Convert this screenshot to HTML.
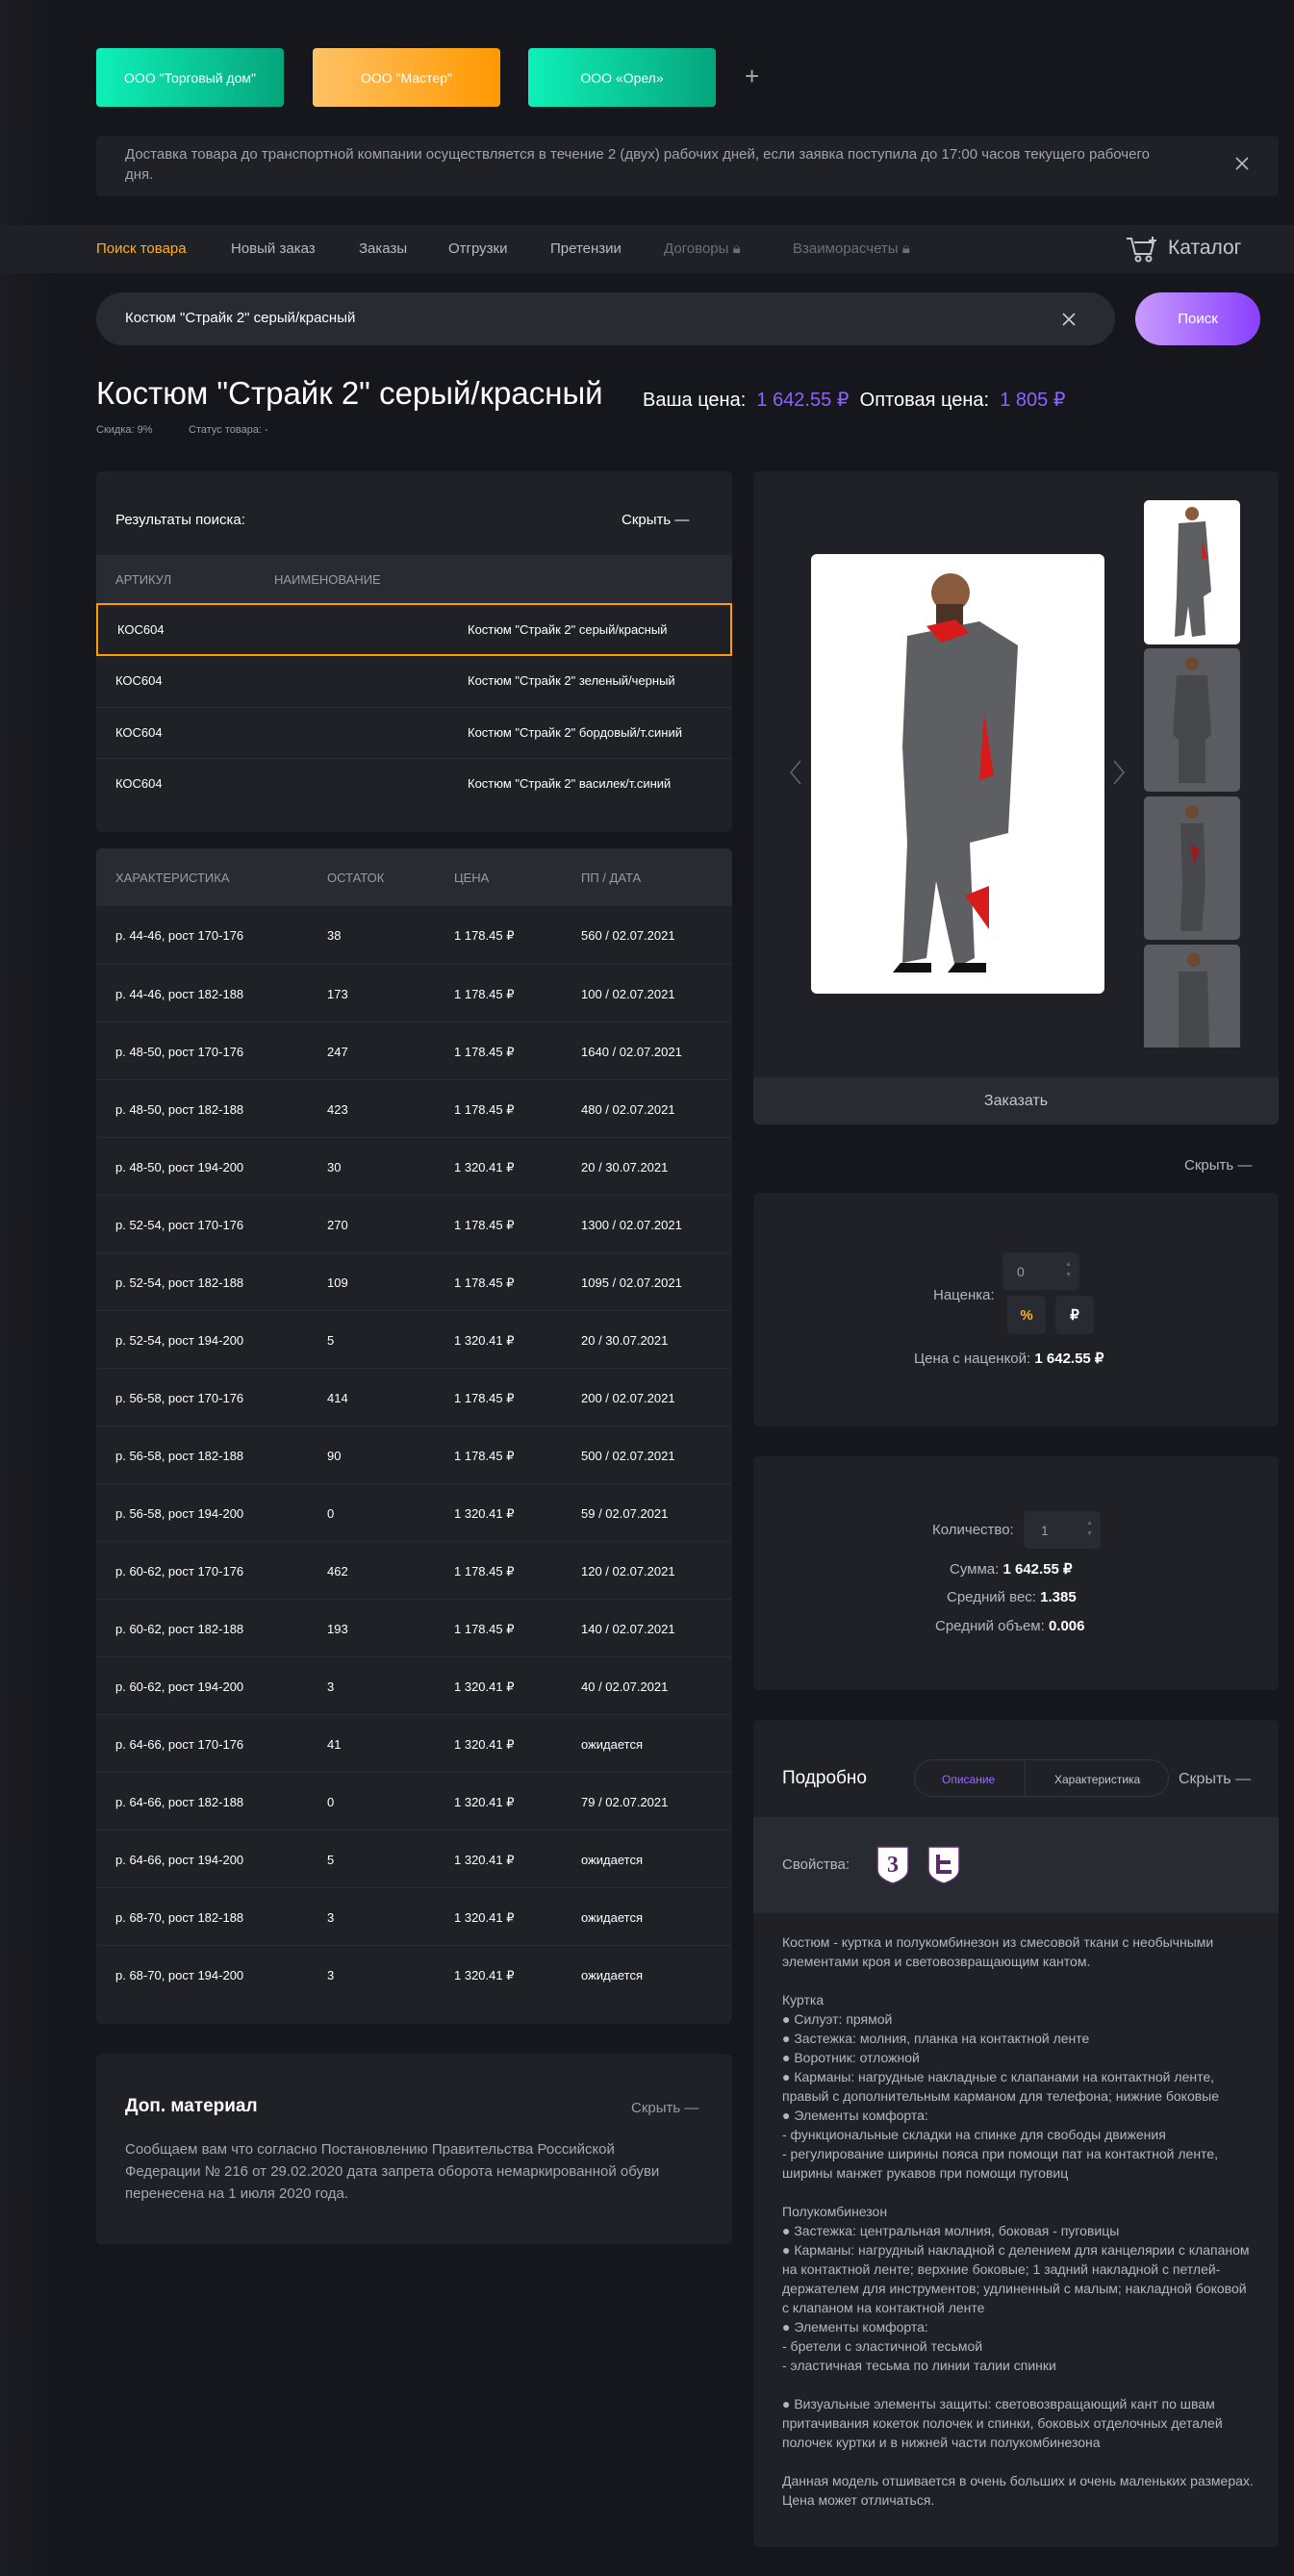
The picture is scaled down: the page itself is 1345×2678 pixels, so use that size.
<!DOCTYPE html>
<html><head><meta charset="utf-8">
<style>
*{box-sizing:border-box;margin:0;padding:0}
body{width:1345px;height:2678px;background:#16171c;font-family:"Liberation Sans",Arial,sans-serif;color:#fff;position:relative;overflow:hidden}
.a{position:absolute}
.tab{position:absolute;top:50px;height:61px;width:195px;border-radius:4px;display:flex;align-items:center;justify-content:center;font-size:14px;color:#fff}
.g{background:linear-gradient(90deg,#0ef0b8,#06a57c)}
.o{background:linear-gradient(90deg,#ffc265,#ff9900)}
.card{position:absolute;background:#1f2127;border-radius:6px;overflow:hidden}
.nav span{position:absolute;top:250px;font-size:15px;color:#b8bac0}
.row{position:absolute;left:0;width:661px;border-top:1px solid #2a2c33;font-size:13px;color:#fff}
.row span{position:absolute}
.hd{position:absolute;left:0;width:661px;background:#292b33;font-size:13px;color:#9a9ca3}
.hd span{position:absolute}
.desc{font-size:14px;line-height:20px;color:#b5b7bd;white-space:nowrap}
.btn{position:absolute;background:#292b33;border-radius:5px;display:flex;align-items:center;justify-content:center;font-size:15px;font-weight:bold}
.inp{position:absolute;background:#292b33;border-radius:5px;font-size:14px;color:#9a9ca3}
.lbl{position:absolute;font-size:15px;color:#b5b7bd;white-space:nowrap}
.lbl b{color:#fff;font-weight:bold}
</style></head><body>
<div class="a" style="left:0;top:0;width:60px;height:2678px;background:linear-gradient(90deg,#1b1c21,#16171c)"></div>

<div class="tab g" style="left:100px">ООО "Торговый дом"</div>
<div class="tab o" style="left:325px">ООО "Мастер"</div>
<div class="tab g" style="left:549px">ООО «Орел»</div>
<div class="a" style="left:774px;top:64px;font-size:26px;color:#aaa;font-weight:300">+</div>

<div class="a" style="left:100px;top:141px;width:1229px;height:63px;background:#1f2127;border-radius:5px"></div>
<div class="a" style="left:130px;top:150px;width:1080px;font-size:15px;line-height:21px;color:#a0a3ab">Доставка товара до транспортной компании осуществляется в течение 2 (двух) рабочих дней, если заявка поступила до 17:00 часов текущего рабочего дня.</div>
<svg class="a" style="left:1283px;top:162px" width="16" height="16"><path d="M2 2L14 14M14 2L2 14" stroke="#bbb" stroke-width="1.6"/></svg>

<div class="a" style="left:0;top:234px;width:1345px;height:50px;background:#1f2127"></div>
<div class="nav">
<span style="left:100px;color:#ffb020">Поиск товара</span>
<span style="left:240px">Новый заказ</span>
<span style="left:373px">Заказы</span>
<span style="left:466px">Отгрузки</span>
<span style="left:572px">Претензии</span>
<span style="left:690px;color:#6d6f76">Договоры 🔒︎</span>
<span style="left:824px;color:#6d6f76">Взаиморасчеты 🔒︎</span>
</div>
<svg class="a" style="left:1170px;top:244px" width="36" height="30" fill="none" stroke="#c5c7cc" stroke-width="2"><path d="M1 4h5l4 16h16l3-12H9M28 2v8M24 6h8"/><circle cx="13" cy="25" r="2.5"/><circle cx="24" cy="25" r="2.5"/></svg>
<div class="a" style="left:1214px;top:246px;font-size:21px;color:#c5c7cc">Каталог</div>

<div class="a" style="left:100px;top:304px;width:1059px;height:55px;background:#292b33;border-radius:28px"></div>
<div class="a" style="left:130px;top:322px;font-size:15px;color:#fff">Костюм "Страйк 2" серый/красный</div>
<svg class="a" style="left:1103px;top:324px" width="16" height="16"><path d="M2 2L14 14M14 2L2 14" stroke="#ccc" stroke-width="1.6"/></svg>
<div class="a" style="left:1180px;top:304px;width:130px;height:55px;border-radius:28px;background:linear-gradient(90deg,#c79bff,#8a3fff);display:flex;align-items:center;justify-content:center;font-size:15px">Поиск</div>

<div class="a" style="left:100px;top:390px;font-size:33px;white-space:nowrap">Костюм "Страйк 2" серый/красный</div>
<div class="a" style="left:668px;top:403px;font-size:20px;white-space:nowrap">Ваша цена: <span style="color:#8e63ff">&nbsp;1 642.55 ₽</span>&nbsp; Оптовая цена: <span style="color:#8e63ff">&nbsp;1 805 ₽</span></div>
<div class="a" style="left:100px;top:441px;font-size:11px;color:#9a9ca3">Скидка: 9%</div>
<div class="a" style="left:196px;top:441px;font-size:11px;color:#9a9ca3">Статус товара: -</div>

<div class="card" style="left:100px;top:490px;width:661px;height:375px">
<div class="a" style="left:20px;top:42px;font-size:15px">Результаты поиска:</div>
<div class="a" style="left:546px;top:42px;font-size:15px">Скрыть —</div>
<div class="hd" style="top:87px;height:50px"><span style="left:20px;top:18px">АРТИКУЛ</span><span style="left:185px;top:18px">НАИМЕНОВАНИЕ</span></div>
<div class="row" style="top:137px;height:55px;border:2px solid #ff9a00"><span style="left:20px;top:18px">КОС604</span><span style="left:384px;top:18px">Костюм "Страйк 2" серый/красный</span></div>
<div class="row" style="top:192px;height:53px;border-top:none"><span style="left:20px;top:18px">КОС604</span><span style="left:386px;top:18px">Костюм "Страйк 2" зеленый/черный</span></div>
<div class="row" style="top:245px;height:53px"><span style="left:20px;top:18px">КОС604</span><span style="left:386px;top:18px">Костюм "Страйк 2" бордовый/т.синий</span></div>
<div class="row" style="top:298px;height:53px"><span style="left:20px;top:18px">КОС604</span><span style="left:386px;top:18px">Костюм "Страйк 2" василек/т.синий</span></div>
</div>

<div class="card" style="left:100px;top:882px;width:661px;height:1222px">
<div class="hd" style="top:0;height:60px"><span style="left:20px;top:23px">ХАРАКТЕРИСТИКА</span><span style="left:240px;top:23px">ОСТАТОК</span><span style="left:372px;top:23px">ЦЕНА</span><span style="left:504px;top:23px">ПП / ДАТА</span></div>
<div id="rows"></div>
</div>

<div class="card" style="left:100px;top:2135px;width:661px;height:198px">
<div class="a" style="left:30px;top:44px;font-size:19px;font-weight:bold">Доп. материал</div>
<div class="a" style="left:556px;top:48px;font-size:15px;color:#9a9ca3">Скрыть —</div>
<div class="a" style="left:30px;top:88px;font-size:15px;line-height:23px;color:#a6a8ae;white-space:nowrap">Сообщаем вам что согласно Постановлению Правительства Российской<br>Федерации № 216 от 29.02.2020 дата запрета оборота немаркированной обуви<br>перенесена на 1 июля 2020 года.</div>
</div>

<div class="card" style="left:783px;top:490px;width:546px;height:679px">
<svg class="a" style="left:37px;top:300px" width="14" height="26"><path d="M12 1L2 13L12 25" stroke="#666" fill="none" stroke-width="1.5"/></svg>
<svg class="a" style="left:373px;top:300px" width="14" height="26"><path d="M2 1L12 13L2 25" stroke="#666" fill="none" stroke-width="1.5"/></svg>
<div class="a" style="left:60px;top:86px;width:305px;height:457px;background:#fff;border-radius:6px">
<svg width="305" height="457" viewBox="0 0 305 457">
<circle cx="145" cy="40" r="20" fill="#8a5a3c"/><rect x="130" y="52" width="28" height="22" fill="#4a3325"/>
<path d="M100 85L175 70L215 95L205 290L165 300L170 420L150 430L130 340L120 420L95 425L100 300L95 200Z" fill="#5d5f62"/>
<path d="M120 75L150 68L165 82L135 92Z" fill="#d91a1a"/><path d="M180 165L190 230L175 235Z" fill="#d91a1a"/><path d="M160 355L185 345L185 390Z" fill="#d91a1a"/>
<path d="M93 425h32v10H85ZM150 425h32v10h-40Z" fill="#111"/>
</svg></div>
<div class="a" style="left:406px;top:30px;width:100px;height:150px;background:#fff;border-radius:5px"><svg width="100" height="150"><circle cx="50" cy="14" r="7" fill="#8a5a3c"/><path d="M36 24L64 22L70 95L62 100L64 140L50 142L46 110L42 140L32 142L34 100Z" fill="#5d5f62"/><path d="M60 40L66 60L60 62Z" fill="#d91a1a"/></svg></div>
<div class="a" style="left:406px;top:184px;width:100px;height:149px;background:#5a5c62;border-radius:5px"><svg width="100" height="150"><circle cx="50" cy="16" r="7" fill="#6a4a35"/><path d="M34 28L66 28L70 90L64 95L64 140L36 140L36 95L30 90Z" fill="#46484c"/></svg></div>
<div class="a" style="left:406px;top:338px;width:100px;height:149px;background:#5a5c62;border-radius:5px"><svg width="100" height="150"><circle cx="50" cy="16" r="7" fill="#6a4a35"/><path d="M38 28L62 28L64 90L60 140L38 140L40 90Z" fill="#46484c"/><path d="M48 50L58 55L52 70Z" fill="#a01818"/></svg></div>
<div class="a" style="left:406px;top:492px;width:100px;height:107px;background:#5a5c62;border-radius:5px 5px 0 0"><svg width="100" height="107"><circle cx="52" cy="16" r="7" fill="#6a4a35"/><path d="M36 28L66 28L68 107L36 107Z" fill="#46484c"/></svg></div>
<div class="a" style="left:0;top:630px;width:546px;height:49px;background:#292b33;display:flex;align-items:center;justify-content:center;font-size:16px;color:#c5c7cc">Заказать</div>
</div>

<div class="a" style="left:1231px;top:1203px;font-size:15px;color:#b5b7bd">Скрыть —</div>

<div class="card" style="left:783px;top:1240px;width:546px;height:243px"></div>
<div class="lbl" style="left:970px;top:1338px">Наценка:</div>
<div class="inp" style="left:1042px;top:1302px;width:80px;height:39px;padding:12px 0 0 15px">0<span style="position:absolute;right:8px;top:7px;font-size:7px;line-height:11px;color:#666">▲<br>▼</span></div>
<div class="btn" style="left:1047px;top:1347px;width:40px;height:40px;color:#ffb020">%</div>
<div class="btn" style="left:1097px;top:1347px;width:40px;height:40px;color:#fff">₽</div>
<div class="lbl" style="left:950px;top:1403px">Цена с наценкой: <b>1 642.55 ₽</b></div>

<div class="card" style="left:783px;top:1514px;width:546px;height:243px"></div>
<div class="lbl" style="left:969px;top:1582px">Количество:</div>
<div class="inp" style="left:1064px;top:1571px;width:80px;height:39px;padding:12px 0 0 18px">1<span style="position:absolute;right:8px;top:7px;font-size:7px;line-height:11px;color:#666">▲<br>▼</span></div>
<div class="lbl" style="left:987px;top:1622px">Сумма: <b>1 642.55 ₽</b></div>
<div class="lbl" style="left:984px;top:1652px">Средний вес: <b>1.385</b></div>
<div class="lbl" style="left:972px;top:1682px">Средний объем: <b>0.006</b></div>

<div class="card" style="left:783px;top:1788px;width:546px;height:860px">
<div class="a" style="left:30px;top:50px;font-size:19px">Подробно</div>
<div class="a" style="left:167px;top:41px;width:265px;height:39px;border:1px solid #33353c;border-radius:20px"></div>
<div class="a" style="left:282px;top:41px;width:1px;height:39px;background:#33353c"></div>
<div class="a" style="left:196px;top:55px;font-size:12px;color:#9a6bff">Описание</div>
<div class="a" style="left:313px;top:55px;font-size:12px;color:#c5c7cc">Характеристика</div>
<div class="a" style="left:442px;top:53px;font-size:16px;color:#b5b7bd">Скрыть —</div>
<div class="a" style="left:0;top:101px;width:546px;height:100px;background:#292b33"></div>
<div class="a" style="left:30px;top:142px;font-size:15px;color:#b5b7bd">Свойства:</div>
<svg class="a" style="left:128px;top:131px" width="34" height="40"><path d="M1 1h32v24c0 7-9 12-16 14C10 37 1 32 1 25Z" fill="#fff" stroke="#5a2a6a" stroke-width="1.5"/><text x="17" y="27" font-family="Liberation Serif" font-weight="bold" font-size="24" fill="#5a2a6a" text-anchor="middle">3</text></svg>
<svg class="a" style="left:181px;top:131px" width="34" height="40"><path d="M1 1h32v24c0 7-9 12-16 14C10 37 1 32 1 25Z" fill="#fff" stroke="#5a2a6a" stroke-width="1.5"/><path d="M11 9v16M11 17h13M9 27h16" stroke="#5a2a6a" stroke-width="4"/></svg>
<div class="a desc" style="left:30px;top:221px">Костюм - куртка и полукомбинезон из смесовой ткани с необычными<br>элементами кроя и световозвращающим кантом.<br><br>Куртка<br>● Силуэт: прямой<br>● Застежка: молния, планка на контактной ленте<br>● Воротник: отложной<br>● Карманы: нагрудные накладные с клапанами на контактной ленте,<br>правый с дополнительным карманом для телефона; нижние боковые<br>● Элементы комфорта:<br>- функциональные складки на спинке для свободы движения<br>- регулирование ширины пояса при помощи пат на контактной ленте,<br>ширины манжет рукавов при помощи пуговиц<br><br>Полукомбинезон<br>● Застежка: центральная молния, боковая - пуговицы<br>● Карманы: нагрудный накладной с делением для канцелярии с клапаном<br>на контактной ленте; верхние боковые; 1 задний накладной с петлей-<br>держателем для инструментов; удлиненный с малым; накладной боковой<br>с клапаном на контактной ленте<br>● Элементы комфорта:<br>- бретели с эластичной тесьмой<br>- эластичная тесьма по линии талии спинки<br><br>● Визуальные элементы защиты: световозвращающий кант по швам<br>притачивания кокеток полочек и спинки, боковых отделочных деталей<br>полочек куртки и в нижней части полукомбинезона<br><br>Данная модель отшивается в очень больших и очень маленьких размерах.<br>Цена может отличаться.</div>
</div>

<script>
var d=[["р. 44-46, рост 170-176","38","1 178.45 ₽","560 / 02.07.2021"],["р. 44-46, рост 182-188","173","1 178.45 ₽","100 / 02.07.2021"],["р. 48-50, рост 170-176","247","1 178.45 ₽","1640 / 02.07.2021"],["р. 48-50, рост 182-188","423","1 178.45 ₽","480 / 02.07.2021"],["р. 48-50, рост 194-200","30","1 320.41 ₽","20 / 30.07.2021"],["р. 52-54, рост 170-176","270","1 178.45 ₽","1300 / 02.07.2021"],["р. 52-54, рост 182-188","109","1 178.45 ₽","1095 / 02.07.2021"],["р. 52-54, рост 194-200","5","1 320.41 ₽","20 / 30.07.2021"],["р. 56-58, рост 170-176","414","1 178.45 ₽","200 / 02.07.2021"],["р. 56-58, рост 182-188","90","1 178.45 ₽","500 / 02.07.2021"],["р. 56-58, рост 194-200","0","1 320.41 ₽","59 / 02.07.2021"],["р. 60-62, рост 170-176","462","1 178.45 ₽","120 / 02.07.2021"],["р. 60-62, рост 182-188","193","1 178.45 ₽","140 / 02.07.2021"],["р. 60-62, рост 194-200","3","1 320.41 ₽","40 / 02.07.2021"],["р. 64-66, рост 170-176","41","1 320.41 ₽","ожидается"],["р. 64-66, рост 182-188","0","1 320.41 ₽","79 / 02.07.2021"],["р. 64-66, рост 194-200","5","1 320.41 ₽","ожидается"],["р. 68-70, рост 182-188","3","1 320.41 ₽","ожидается"],["р. 68-70, рост 194-200","3","1 320.41 ₽","ожидается"]];
var h="";d.forEach(function(r,i){h+='<div class="row" style="top:'+(60+i*60)+'px;height:60px;'+(i==0?'border-top:none':'')+'"><span style="left:20px;top:23px">'+r[0]+'</span><span style="left:240px;top:23px">'+r[1]+'</span><span style="left:372px;top:23px">'+r[2]+'</span><span style="left:504px;top:23px">'+r[3]+'</span></div>';});
document.getElementById("rows").innerHTML=h;
</script>
</body></html>
